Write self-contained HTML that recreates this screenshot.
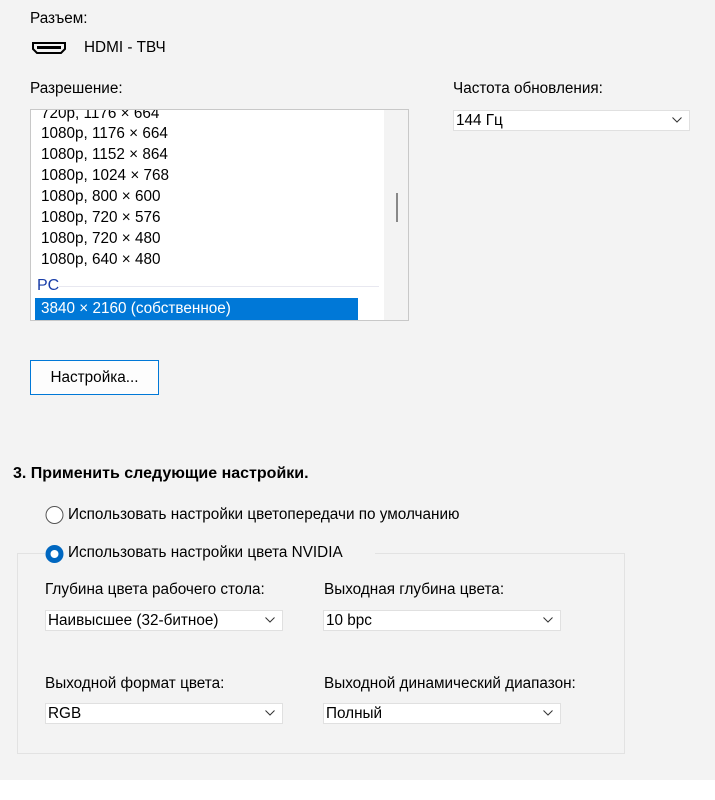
<!DOCTYPE html>
<html><head><style>
body{margin:0;width:715px;height:800px;background:#fff;font-family:"Liberation Sans",sans-serif;font-size:15.3px;color:#000;position:relative;overflow:hidden}
#bg{position:absolute;left:0;top:0;width:715px;height:780px;background:#f3f3f3}
.a{position:absolute;white-space:nowrap}
.lb{position:absolute;left:30px;top:109px;width:377px;height:210px;background:#fff;border:1px solid #c8c8c8;overflow:hidden}
.it{position:absolute;left:10px;line-height:21px}
.sel{position:absolute;left:4px;top:188px;width:323px;height:22px;background:#0078d7;color:#fff}
.sb{position:absolute;right:0;top:0;width:24px;height:210px;background:#f3f3f3}
.dd{position:absolute;height:21px;background:#fff;border:1px solid #e0e0e0;box-sizing:border-box;line-height:20px;padding-left:2px}
.dd svg{position:absolute;right:7px;top:6px}
</style></head><body>
<div id="bg"></div>
<div class="a" style="left:30px;top:10px">Разъем:</div>
<svg class="a" style="left:32px;top:42px" width="34" height="12"><path d="M1 1H33V7L29 11H5L1 7Z" fill="none" stroke="#000" stroke-width="2"/><rect x="5" y="4" width="24" height="3" fill="#000"/></svg>
<div class="a" style="left:84px;top:39px">HDMI - ТВЧ</div>
<div class="a" style="left:30px;top:80px">Разрешение:</div>
<div class="a" style="left:453px;top:80px">Частота обновления:</div>
<div class="lb">
<div class="it" style="top:-7px">720p, 1176 × 664</div>
<div class="it" style="top:13px">1080p, 1176 × 664</div>
<div class="it" style="top:34px">1080p, 1152 × 864</div>
<div class="it" style="top:55px">1080p, 1024 × 768</div>
<div class="it" style="top:76px">1080p, 800 × 600</div>
<div class="it" style="top:97px">1080p, 720 × 576</div>
<div class="it" style="top:118px">1080p, 720 × 480</div>
<div class="it" style="top:139px">1080p, 640 × 480</div>
<div class="it" style="top:165px;left:6px;color:#1a3ea8;font-size:16px">PC</div>
<div style="position:absolute;left:28px;top:176px;width:320px;height:1px;background:#e8e8f0"></div>
<div class="sel"><span style="position:absolute;left:6px;top:2px">3840 × 2160 (собственное)</span></div>
<div class="sb"><div style="position:absolute;left:12px;top:83px;width:2px;height:29px;background:#888"></div></div>
</div>
<div class="dd" style="left:453px;top:110px;width:237px">144 Гц<svg width="10" height="6"><path d="M0.5 0.5L5 5L9.5 0.5" fill="none" stroke="#333"/></svg></div>
<div class="a" style="left:30px;top:360px;width:129px;height:35px;background:#fdfdfd;border:1px solid #0078d7;box-sizing:border-box;text-align:center;line-height:33px">Настройка...</div>
<div class="a" style="left:13px;top:465px;font-weight:bold;font-size:16px">3. Применить следующие настройки.</div>
<div class="a" style="left:17px;top:553px;width:606px;height:199px;border:1px solid #e2e2e2"></div>
<div class="a" style="left:45px;top:544px;width:330px;height:18px;background:#f3f3f3"></div>
<svg class="a" style="left:45px;top:505px" width="20" height="20"><circle cx="9.5" cy="10" r="8.5" fill="#fff" stroke="#555"/></svg>
<div class="a" style="left:68px;top:506px">Использовать настройки цветопередачи по умолчанию</div>
<svg class="a" style="left:45px;top:544px" width="20" height="20"><circle cx="9.5" cy="10" r="9" fill="#0067c0"/><circle cx="9.5" cy="10" r="4" fill="#fff"/></svg>
<div class="a" style="left:68px;top:544px">Использовать настройки цвета NVIDIA</div>
<div class="a" style="left:45px;top:581px">Глубина цвета рабочего стола:</div>
<div class="a" style="left:324px;top:581px">Выходная глубина цвета:</div>
<div class="dd" style="left:45px;top:610px;width:238px">Наивысшее (32-битное)<svg width="10" height="6"><path d="M0.5 0.5L5 5L9.5 0.5" fill="none" stroke="#333"/></svg></div>
<div class="dd" style="left:323px;top:610px;width:238px">10 bpc<svg width="10" height="6"><path d="M0.5 0.5L5 5L9.5 0.5" fill="none" stroke="#333"/></svg></div>
<div class="a" style="left:45px;top:675px">Выходной формат цвета:</div>
<div class="a" style="left:324px;top:675px">Выходной динамический диапазон:</div>
<div class="dd" style="left:45px;top:703px;width:238px">RGB<svg width="10" height="6"><path d="M0.5 0.5L5 5L9.5 0.5" fill="none" stroke="#333"/></svg></div>
<div class="dd" style="left:323px;top:703px;width:238px">Полный<svg width="10" height="6"><path d="M0.5 0.5L5 5L9.5 0.5" fill="none" stroke="#333"/></svg></div>
</body></html>
